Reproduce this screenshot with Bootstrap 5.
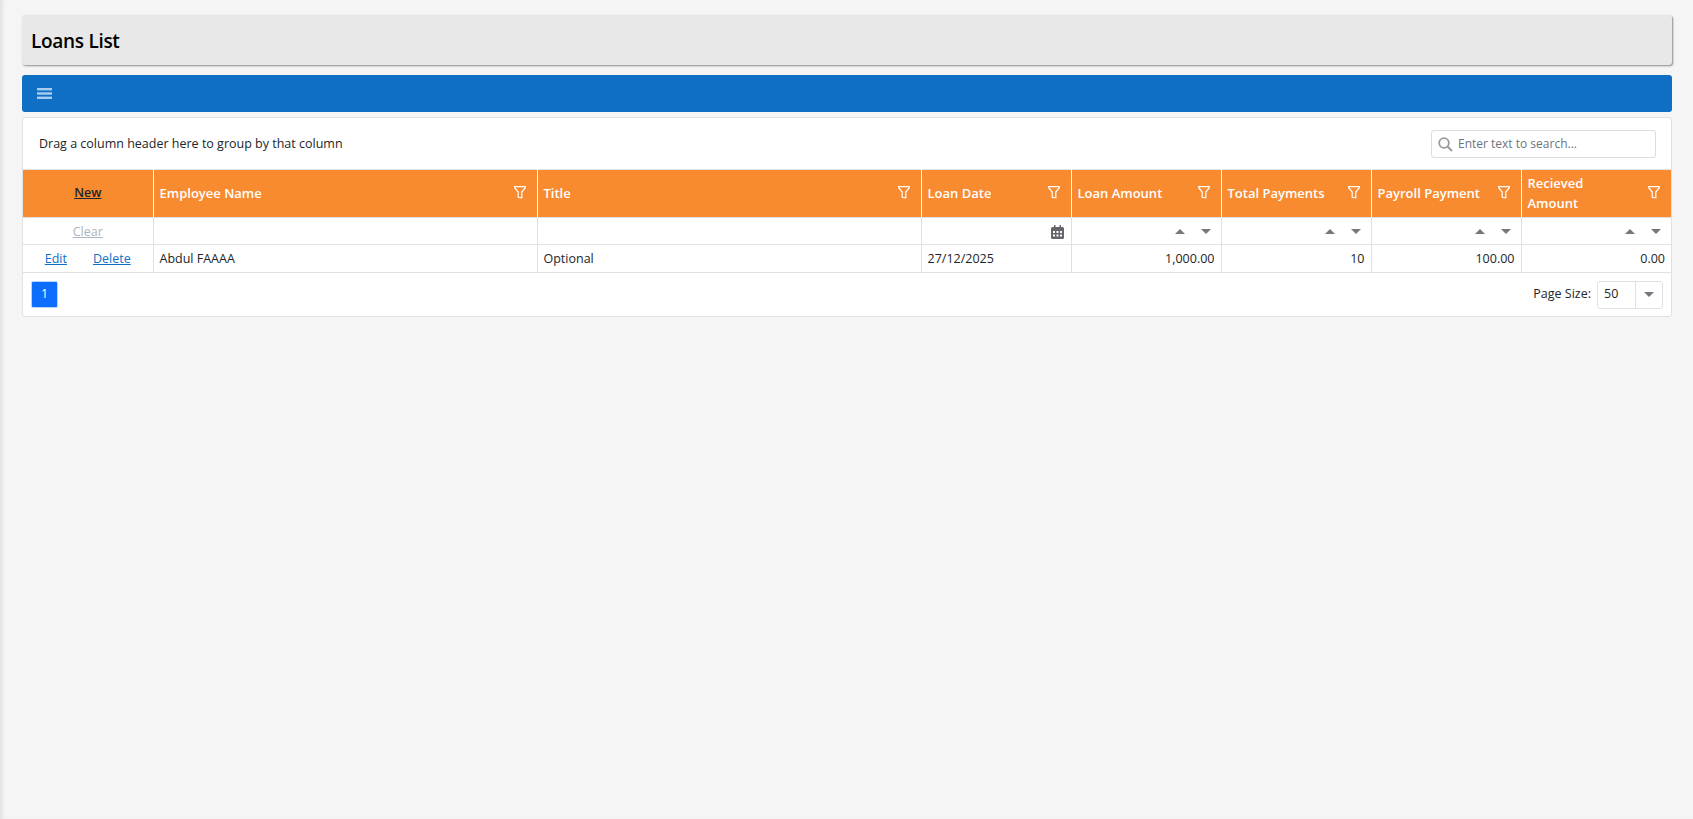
<!DOCTYPE html>
<html lang="en">
  <head>
    <meta charset="UTF-8" />
    <meta name="viewport" content="width=device-width, initial-scale=1.0" />
    <title>Loans List</title>
    <link
      href="https://cdn.jsdelivr.net/npm/bootstrap@5.3.0/dist/css/bootstrap.min.css"
      rel="stylesheet"
    />
    <style>
      body {
        background: #f5f5f5;
        font-family: "Open Sans", "Noto Sans", sans-serif;
        font-size: 12.5px;
        color: #212529;
        padding: 15px 21px 0 22px;
        min-height: 100vh;
        box-shadow: inset 5px 0 4px -3px #dedede;
      }
      .title-bar {
        background: #e8e8e8;
        height: 50px;
        border-radius: 3px;
        box-shadow: 1px 1px 2px #8a8a8a;
        padding: 2px 9px 0 9px;
        margin-bottom: 10px;
      }
      .title-bar h1 {
        font-size: 19px;
        font-weight: 600;
        letter-spacing: -0.3px;
        color: #000;
        margin: 0;
      }
      .menu-bar {
        background: #0e6fc4;
        height: 37px;
        border-radius: 3px;
        padding: 0 15px;
        margin-bottom: 5px;
      }
      .grid-box {
        background: #fff;
        border: 1px solid #dfe1e6;
        border-radius: 3px;
      }
      .group-row {
        height: 51px;
        padding: 1px 15px 0 16px;
      }
      .search-box {
        width: 225px;
        height: 28px;
        border: 1px solid #d9dce2;
        border-radius: 3px;
        padding: 0 6px;
        color: #6c757d;
        font-size: 12px;
        gap: 5px;
      }
      .loan-table {
        table-layout: fixed;
        margin: 0;
        width: 100%;
      }
      .loan-table th,
      .loan-table td {
        border: 1px solid #dfe1e6;
        padding: 0 6px;
        vertical-align: middle;
        box-shadow: none;
      }
      .loan-table tr > :first-child { border-left: 0; }
      .loan-table tr > :last-child { border-right: 0; }
      .loan-table thead th {
        background: #f88a30;
        color: #fff;
        font-size: 13px;
        font-weight: 600;
        height: 48px;
        line-height: 20px;
        padding-bottom: 2px;
        border-top-color: #dfe1e6;
        border-bottom-color: #dfe1e6;
        border-left-color: #fff;
        border-right-color: #fff;
      }
      .funnel { margin-right: 5px; flex-shrink: 0; }
      .filter-row td { height: 27px; padding-top: 1px; }
      .data-row td { height: 28px; padding-top: 2px; }
      .loan-table a { color: #0e6fc4; }
      .loan-table thead .new-link { color: #212529; font-size: 12.5px; }
      .loan-table .clear-link { color: #adb5bd; display: inline-block; padding-top: 2px; }
      .row-link + .row-link { margin-left: 26px; }
      .cal-icon { margin-right: 1px; }
      .spin-pair {
        gap: 16px;
        padding-right: 4px;
      }
      .tri-up,
      .tri-down {
        display: inline-block;
        width: 0;
        height: 0;
        border-left: 5px solid transparent;
        border-right: 5px solid transparent;
      }
      .tri-up { border-bottom: 5px solid #74777c; }
      .tri-down { border-top: 5px solid #74777c; }
      .pager-row {
        height: 43px;
        padding: 0 8px;
      }
      .page-btn {
        width: 27px;
        height: 27px;
        background: #0d6efd;
        color: #fff;
        border-radius: 2px;
        border: 1px solid #b9d3f5;
      }
      .size-wrap { gap: 6px; }
      .size-box {
        width: 66px;
        height: 28px;
        border: 1px solid #dfe1e6;
        border-radius: 3px;
      }
      .size-val { padding-left: 6px; }
      .size-arrow {
        width: 27px;
        border-left: 1px solid #dfe1e6;
      }
    </style>
  </head>
  <body>
    <div class="title-bar d-flex align-items-center">
      <h1>Loans List</h1>
    </div>

    <div class="menu-bar d-flex align-items-center">
      <svg width="15" height="11" viewBox="0 0 15 11" fill="#a9cdf0">
        <rect y="0" width="15" height="2.4" />
        <rect y="4.300" width="15" height="2.4" />
        <rect y="8.600" width="15" height="2.4" />
      </svg>
    </div>

    <div class="grid-box">
      <div class="group-row d-flex align-items-center justify-content-between">
        <span>Drag a column header here to group by that column</span>
        <div class="search-box d-flex align-items-center">
          <svg width="15" height="15" viewBox="0 0 15 15" fill="none" stroke="#999" stroke-width="1.8">
            <circle cx="6" cy="6" r="4.800" />
            <path d="M9.500 9.500 14 14" />
          </svg>
          <span>Enter text to search...</span>
        </div>
      </div>

      <table class="table loan-table">
        <colgroup>
          <col style="width: 130px" />
          <col />
          <col />
          <col style="width: 150px" />
          <col style="width: 150px" />
          <col style="width: 150px" />
          <col style="width: 150px" />
          <col style="width: 150px" />
        </colgroup>
        <thead>
          <tr>
            <th class="text-center"><a href="#" class="new-link">New</a></th>
            <th><div class="d-flex align-items-center justify-content-between">Employee Name <svg class="funnel" width="12" height="13" viewBox="0 0 12 13" fill="none" stroke="#fff" stroke-width="1.200"><path d="M.7.7h10.600v1L7.800 6v5.800L4.200 11.300V6L.7 1.700z" /></svg></div></th>
            <th><div class="d-flex align-items-center justify-content-between">Title <svg class="funnel" width="12" height="13" viewBox="0 0 12 13" fill="none" stroke="#fff" stroke-width="1.200"><path d="M.7.7h10.600v1L7.800 6v5.800L4.200 11.300V6L.7 1.700z" /></svg></div></th>
            <th><div class="d-flex align-items-center justify-content-between">Loan Date <svg class="funnel" width="12" height="13" viewBox="0 0 12 13" fill="none" stroke="#fff" stroke-width="1.200"><path d="M.7.7h10.600v1L7.800 6v5.800L4.200 11.300V6L.7 1.700z" /></svg></div></th>
            <th><div class="d-flex align-items-center justify-content-between">Loan Amount <svg class="funnel" width="12" height="13" viewBox="0 0 12 13" fill="none" stroke="#fff" stroke-width="1.200"><path d="M.7.7h10.600v1L7.800 6v5.800L4.200 11.300V6L.7 1.700z" /></svg></div></th>
            <th><div class="d-flex align-items-center justify-content-between">Total Payments <svg class="funnel" width="12" height="13" viewBox="0 0 12 13" fill="none" stroke="#fff" stroke-width="1.200"><path d="M.7.7h10.600v1L7.800 6v5.800L4.200 11.300V6L.7 1.700z" /></svg></div></th>
            <th><div class="d-flex align-items-center justify-content-between">Payroll Payment <svg class="funnel" width="12" height="13" viewBox="0 0 12 13" fill="none" stroke="#fff" stroke-width="1.200"><path d="M.7.7h10.600v1L7.800 6v5.800L4.200 11.300V6L.7 1.700z" /></svg></div></th>
            <th><div class="d-flex align-items-center justify-content-between">Recieved<br />Amount <svg class="funnel" width="12" height="13" viewBox="0 0 12 13" fill="none" stroke="#fff" stroke-width="1.200"><path d="M.7.7h10.600v1L7.800 6v5.800L4.200 11.300V6L.7 1.700z" /></svg></div></th>
          </tr>
        </thead>
        <tbody>
          <tr class="filter-row">
            <td class="text-center"><a href="#" class="clear-link">Clear</a></td>
            <td></td>
            <td></td>
            <td class="text-end">
              <svg class="cal-icon" width="13" height="14" viewBox="0 0 13 14" fill="#62656a">
                <path d="M3 0h1.500v2h4V0H10v2h1.500A1.500 1.500 0 0 1 13 3.500V12.500A1.500 1.500 0 0 1 11.500 14h-10A1.500 1.500 0 0 1 0 12.500V3.500A1.500 1.500 0 0 1 1.500 2H3z" />
                <g fill="#fff">
                  <rect x="2" y="6" width="2" height="2" /><rect x="5.500" y="6" width="2" height="2" /><rect x="9" y="6" width="2" height="2" />
                  <rect x="2" y="9.500" width="2" height="2" /><rect x="5.500" y="9.500" width="2" height="2" /><rect x="9" y="9.500" width="2" height="2" />
                </g>
              </svg>
            </td>
            <td><div class="spin-pair d-flex justify-content-end align-items-center"><span class="tri-up"></span><span class="tri-down"></span></div></td>
            <td><div class="spin-pair d-flex justify-content-end align-items-center"><span class="tri-up"></span><span class="tri-down"></span></div></td>
            <td><div class="spin-pair d-flex justify-content-end align-items-center"><span class="tri-up"></span><span class="tri-down"></span></div></td>
            <td><div class="spin-pair d-flex justify-content-end align-items-center"><span class="tri-up"></span><span class="tri-down"></span></div></td>
          </tr>
          <tr class="data-row">
            <td class="text-center"><a href="#" class="row-link">Edit</a><a href="#" class="row-link">Delete</a></td>
            <td>Abdul FAAAA</td>
            <td>Optional</td>
            <td>27/12/2025</td>
            <td class="text-end">1,000.00</td>
            <td class="text-end">10</td>
            <td class="text-end">100.00</td>
            <td class="text-end">0.00</td>
          </tr>
        </tbody>
      </table>

      <div class="pager-row d-flex align-items-center justify-content-between">
        <div class="page-btn d-flex align-items-center justify-content-center">1</div>
        <div class="size-wrap d-flex align-items-center">
          <span>Page Size:</span>
          <div class="size-box d-flex">
            <span class="size-val flex-grow-1 d-flex align-items-center">50</span>
            <span class="size-arrow d-flex align-items-center justify-content-center"><span class="tri-down"></span></span>
          </div>
        </div>
      </div>
    </div>

    <script src="https://cdn.jsdelivr.net/npm/bootstrap@5.3.0/dist/js/bootstrap.bundle.min.js"></script>
  </body>
</html>
